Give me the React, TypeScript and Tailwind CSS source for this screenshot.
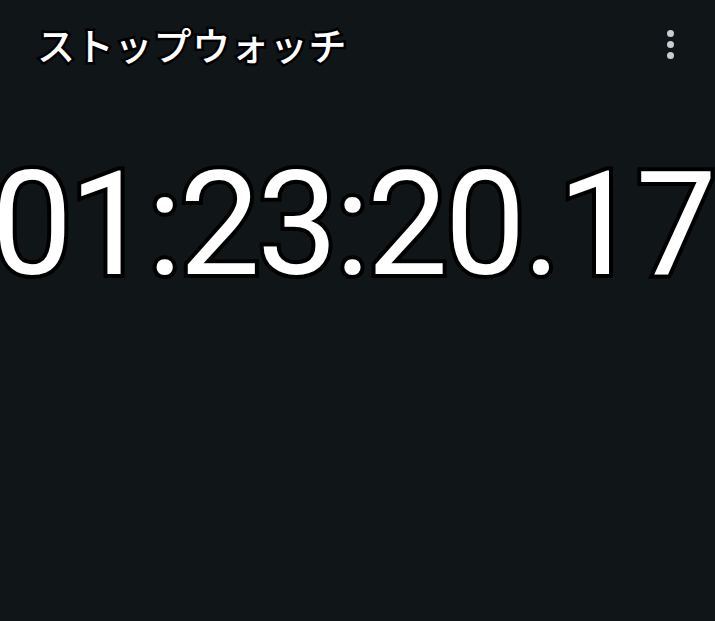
export default function App() {
  return (
    <div className="h-[621px] w-full overflow-hidden bg-[#101518] text-white">
      <div className="flex h-[90px] items-center justify-between pl-[37px] pr-[29px] pb-[2px]">
        <h1
          className="text-[38px] font-medium leading-none tracking-[0.8px] [font-family:'Noto_Sans_CJK_JP',sans-serif] [-webkit-text-stroke:5px_black] [paint-order:stroke_fill]"
        >
          ストップウォッチ
        </h1>
        <button type="button" className="flex h-8 w-8 flex-col items-center justify-center gap-[4px]">
          <span className="h-[7px] w-[7px] rounded-full bg-[#c9cdd1]" />
          <span className="h-[7px] w-[7px] rounded-full bg-[#c9cdd1]" />
          <span className="h-[7px] w-[7px] rounded-full bg-[#c9cdd1]" />
        </button>
      </div>
      <div className="mt-[63px] flex justify-center pr-[10px]">
        <div className="whitespace-nowrap text-[144px] font-[450] leading-none tracking-[-3px] [font-family:Roboto,sans-serif] [-webkit-text-stroke:8px_black] [paint-order:stroke_fill]">
          01:23:20.17
        </div>
      </div>
    </div>
  );
}
